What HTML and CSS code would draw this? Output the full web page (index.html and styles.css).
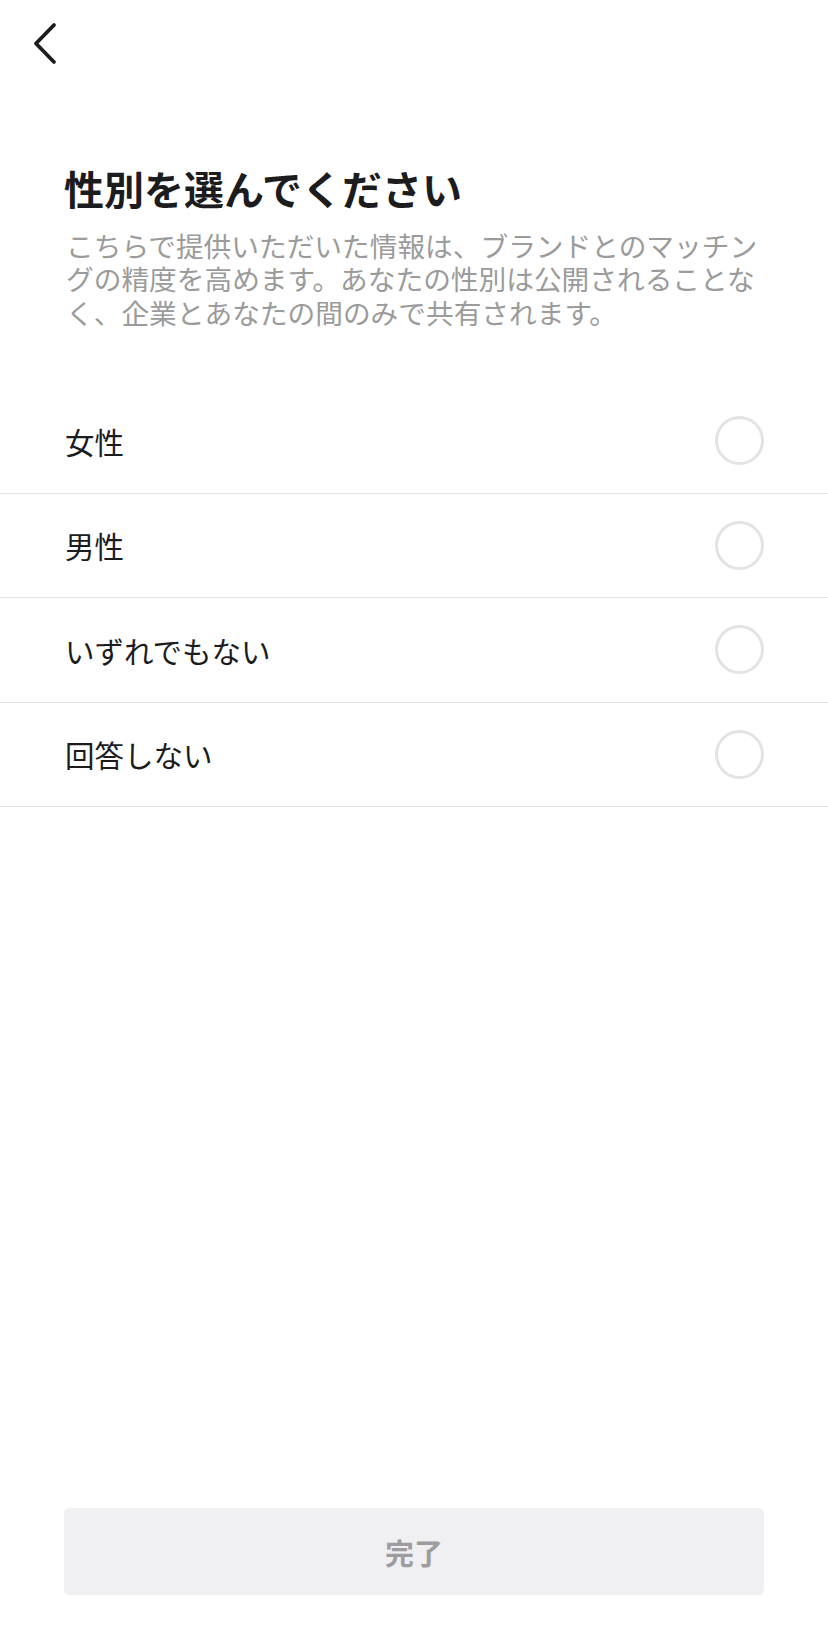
FILE: index.html
```html
<!DOCTYPE html>
<html lang="ja">
<head>
<meta charset="utf-8">
<link rel="stylesheet" href="styles.css">
</head>
<body>
<div class="page">
  <header class="header">
    <svg class="back" width="40" height="50" viewBox="0 0 40 50">
      <polyline points="26,6 8,24.5 26,43" fill="none" stroke="#1c1c1e" stroke-width="3.8" stroke-linecap="round" stroke-linejoin="round"/>
    </svg>
  </header>
  <main class="main">
    <h1 class="title">性別を選んでください</h1>
    <p class="desc">こちらで提供いただいた情報は、ブランドとのマッチングの精度を高めます。あなたの性別は公開されることなく、企業とあなたの間のみで共有されます。</p>
    <ul class="options">
      <li class="option"><span class="label">女性</span><span class="radio"></span></li>
      <li class="option"><span class="label">男性</span><span class="radio"></span></li>
      <li class="option"><span class="label">いずれでもない</span><span class="radio"></span></li>
      <li class="option"><span class="label">回答しない</span><span class="radio"></span></li>
    </ul>
  </main>
  <footer class="footer">
    <button class="done">完了</button>
  </footer>
</div>
</body>
</html>
```
FILE: styles.css
```css
* { box-sizing: border-box; }
html, body { margin: 0; padding: 0; background: #fff; }
body {
  font-family: "Noto Sans CJK JP", "Noto Sans", sans-serif;
  color: #1c1c1e;
}
.page {
  width: 828px;
  height: 1636px;
  display: flex;
  flex-direction: column;
}
.header {
  height: 88px;
  padding: 19px 0 0 28px;
}
.back { display: block; }
.main { flex: 1; }
.title {
  margin: 76px 60px 0 64px;
  font-size: 40px;
  line-height: 49px;
  font-weight: 700;
  color: #1c1c1e;
}
.desc {
  margin: 16px 66px 0;
  font-size: 27.7px;
  line-height: 33.4px;
  color: #9b9b9b;
}
.options {
  list-style: none;
  margin: 60px 0 0;
  padding: 0;
}
.option {
  height: 104.5px;
  display: flex;
  align-items: center;
  justify-content: space-between;
  padding: 0 64px 0 65px;
  border-bottom: 1.5px solid #e2e2e4;
}
.label {
  font-size: 29.5px;
  color: #1c1c1e;
}
.radio {
  width: 49px;
  height: 49px;
  border-radius: 50%;
  border: 3px solid #e3e3e3;
}
.footer {
  padding: 0 64px 41px;
}
.done {
  display: block;
  width: 100%;
  height: 87px;
  border: none;
  border-radius: 5px;
  background: #f0f0f2;
  color: #9d9d9f;
  font-family: "Noto Sans CJK JP", sans-serif;
  font-size: 29px;
  font-weight: 700;
}
```
